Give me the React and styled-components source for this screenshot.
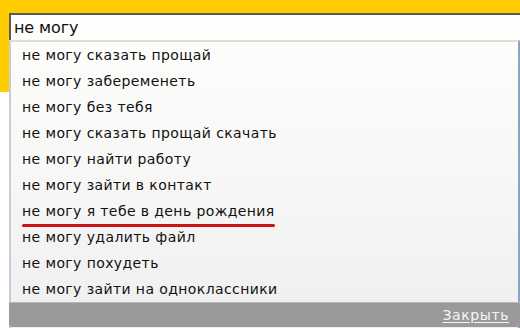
import React from "react";
import styled, { createGlobalStyle } from "styled-components";

const Global = createGlobalStyle`
  html, body { margin: 0; padding: 0; }
  body {
    width: 520px;
    height: 328px;
    overflow: hidden;
    background: linear-gradient(#ffcc00 0, #ffcc00 92px, #ffffff 92px);
    font-family: "DejaVu Sans", Verdana, sans-serif;
  }
`;

const Page = styled.div`
  padding: 13px 0 0 9px;
  display: flex;
  flex-direction: column;
`;

const Input = styled.div`
  height: 25px;
  border-top: 2px solid #5a5a5a;
  border-left: 2px solid #5a5a5a;
  background: #fdfefc;
  display: flex;
  align-items: center;
  padding-left: 3px;
  font-size: 16px;
  color: #111;
  letter-spacing: -0.1px;
`;

const Dropdown = styled.div`
  width: 507px;
  border-top: 2px solid #e2ddd4;
  border-left: 2px solid #c3cfdc;
  border-right: 2px solid #8fa3c0;
  background: linear-gradient(#fdfefc, #efefef);
  display: flex;
  flex-direction: column;
`;

const List = styled.ul`
  list-style: none;
  margin: 0;
  padding: 0;
  display: flex;
  flex-direction: column;
`;

const Row = styled.li`
  height: 26px;
  display: flex;
  align-items: center;
  padding-left: 11px;
  font-size: 14px;
  letter-spacing: 0.4px;
  color: #111;
`;

const Label = styled.span`
  position: relative;
  &::after {
    content: "";
    display: ${(p) => (p.$marked ? "block" : "none")};
    position: absolute;
    left: 0;
    right: 0;
    bottom: -8px;
    height: 3px;
    border-radius: 2px;
    background: #c81414;
  }
`;

const Footer = styled.div`
  height: 24px;
  margin-left: -2px;
  margin-right: -2px;
  margin-bottom: 2px;
  background: #9a9a9a;
  border-top: 1px solid #b8b8b8;
  border-bottom-left-radius: 3px;
  display: flex;
  justify-content: flex-end;
  align-items: center;
  padding-right: 11px;
`;

const Close = styled.a`
  color: #f6f6f6;
  font-size: 14px;
  letter-spacing: 0.6px;
  text-decoration: underline;
  text-underline-offset: 2px;
  cursor: pointer;
`;

const items = [
  "не могу сказать прощай",
  "не могу забеременеть",
  "не могу без тебя",
  "не могу сказать прощай скачать",
  "не могу найти работу",
  "не могу зайти в контакт",
  "не могу я тебе в день рождения",
  "не могу удалить файл",
  "не могу похудеть",
  "не могу зайти на одноклассники",
];

export default function App() {
  return (
    <>
      <Global />
      <Page>
        <Input>не могу</Input>
        <Dropdown>
          <List>
            {items.map((t, i) => (
              <Row key={i}>
                <Label $marked={i === 6}>{t}</Label>
              </Row>
            ))}
          </List>
          <Footer>
            <Close>Закрыть</Close>
          </Footer>
        </Dropdown>
      </Page>
    </>
  );
}
